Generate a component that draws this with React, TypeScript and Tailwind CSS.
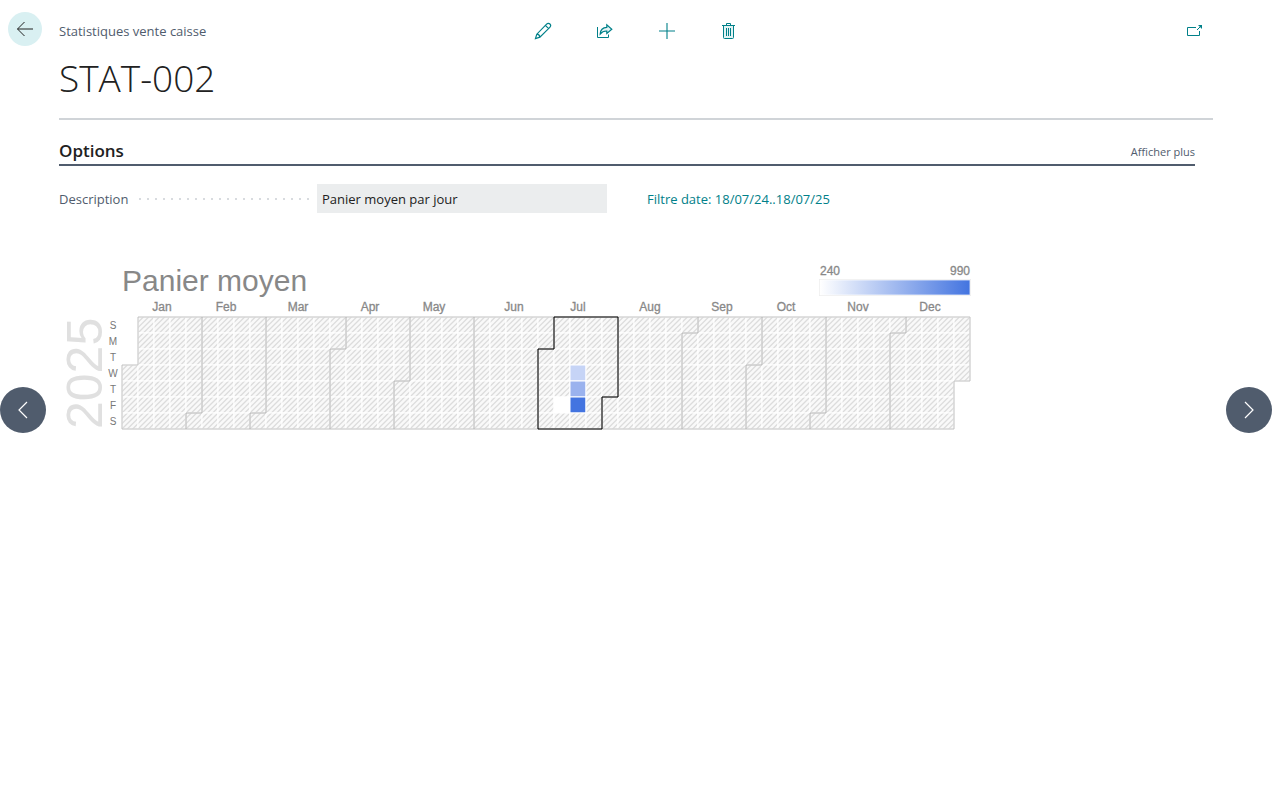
import React from "react";

const CELL = 16;
const LEFT = 122;
const TOP = 317;

const MONTHS = [
  { name: "Jan", x: 162, days: 31 },
  { name: "Feb", x: 226, days: 28 },
  { name: "Mar", x: 298, days: 31 },
  { name: "Apr", x: 370, days: 30 },
  { name: "May", x: 434, days: 31 },
  { name: "Jun", x: 514, days: 30 },
  { name: "Jul", x: 578, days: 31 },
  { name: "Aug", x: 650, days: 31 },
  { name: "Sep", x: 722, days: 30 },
  { name: "Oct", x: 786, days: 31 },
  { name: "Nov", x: 858, days: 30 },
  { name: "Dec", x: 930, days: 31 },
];

const WEEKDAYS = ["S", "M", "T", "W", "T", "F", "S"];

// 1 January 2025 is a Wednesday.
const FIRST_WEEKDAY = 3;

// Day of the year (from 0) to cell colour.
const VALUES: Record<number, string> = {
  191: "#ffffff",
  196: "#c6d4f6",
  197: "#9ab2ee",
  198: "#4374e0",
};

function position(day: number) {
  const slot = day + FIRST_WEEKDAY;
  return { x: LEFT + Math.floor(slot / 7) * CELL, y: TOP + (slot % 7) * CELL };
}

const BOTTOM = TOP + 7 * CELL;

function divider(day: number) {
  const { x, y } = position(day);
  if (y === TOP) return `M${x} ${TOP}V${BOTTOM}`;
  return `M${x + CELL} ${TOP}V${y}H${x}V${BOTTOM}`;
}

const monthStarts = MONTHS.map((_, i) =>
  MONTHS.slice(0, i).reduce((sum, m) => sum + m.days, 0),
);

const days = Array.from({ length: 365 }, (_, i) => i);

function CalendarChart() {
  return (
    <svg
      role="img"
      aria-label="Panier moyen 2025"
      width="916"
      height="175"
      viewBox="59 260 916 175"
      fontFamily="'Liberation Sans', Arial, sans-serif"
      className="block shrink-0 overflow-visible"
    >
      <defs>
        <pattern id="hatch" x="122" y="317" width="16" height="16" patternUnits="userSpaceOnUse">
          <rect width="16" height="16" fill="#f9f9f9" />
          <path
            d="M-1 6.33L6.33 -1M-1 11.67L11.67 -1M-1 17L17 -1M4.33 17L17 4.33M9.67 17L17 9.67M15 17L17 15M-1 1L1 -1"
            stroke="#dcdcdc"
            strokeWidth="1.3"
          />
        </pattern>
        <linearGradient id="scale">
          <stop offset="0" stopColor="#ffffff" />
          <stop offset="1" stopColor="#4374e0" />
        </linearGradient>
      </defs>

      <text x="122" y="291" fontSize="30" fill="#888888">Panier moyen</text>

      <g fontSize="12" fill="#888888" stroke="#888888" strokeWidth="0.3">
        <text x="820" y="275">240</text>
        <text x="970" y="275" textAnchor="end">990</text>
        {MONTHS.map((m) => (
          <text key={m.name} x={m.x} y="311" textAnchor="middle">{m.name}</text>
        ))}
      </g>
      <rect x="819" y="279" width="152" height="17" fill="#ebebeb" />
      <rect x="820" y="280" width="150" height="15" fill="url(#scale)" stroke="#ffffff" strokeOpacity="0.7" />

      <g fontSize="10" fill="#777777" textAnchor="middle">
        {WEEKDAYS.map((d, i) => (
          <text key={i} x="113" y={329 + i * CELL}>{d}</text>
        ))}
      </g>
      <text transform="translate(102 429) rotate(-90)" fontSize="50" fill="#e0e0e0">2025</text>

      <g stroke="#ffffff">
        {days.map((d) => {
          const { x, y } = position(d);
          return (
            <rect key={d} x={x} y={y} width={CELL} height={CELL} fill={VALUES[d] ?? "url(#hatch)"} />
          );
        })}
      </g>

      <g fill="none">
        <path d="M138 317H970V381H954V429H122V365H138Z" stroke="#c0c0c0" />
        {monthStarts.slice(1).map((d) => (
          <path key={d} d={divider(d)} stroke="#b0b0b0" />
        ))}
        <path d="M554 317H618V397H602V429H538V349H554Z" stroke="#000000" />
      </g>
    </svg>
  );
}

const iconProps = {
  width: 18,
  height: 18,
  viewBox: "0 0 18 18",
  fill: "none",
  stroke: "currentColor",
  "aria-hidden": true,
} as const;

const actions = [
  {
    label: "Modifier",
    icon: (
      <svg {...iconProps}>
        <path
          d="M1.5 16.5L2.8 12.2L12.6 2.2C13.6 1.2 15 1.1 15.9 2C16.8 2.9 16.8 4.3 15.8 5.3L5.9 15.2L1.5 16.5ZM11.4 3.4L14.6 6.6M2.8 12.2C4.5 12.3 5.7 13.5 5.9 15.2"
          strokeWidth="1.2"
        />
      </svg>
    ),
  },
  {
    label: "Partager",
    icon: (
      <svg {...iconProps}>
        <path d="M1.5 5V15.5H12.5V12.5" />
        <path d="M4.2 12C4.4 8 6.8 5.6 10.8 5.4V2.8L15.8 7.3L10.8 11.5V9C8 8.8 6 9.8 4.2 12Z" fill="#e3f3f4" strokeWidth="1.2" />
      </svg>
    ),
  },
  {
    label: "Nouveau",
    icon: (
      <svg {...iconProps}>
        <path d="M9 1V17M1 9H17" strokeWidth="1.1" />
      </svg>
    ),
  },
  {
    label: "Supprimer",
    icon: (
      <svg {...iconProps}>
        <path d="M3.5 3.5V15.5C3.5 16.2 3.8 16.5 4.5 16.5H12.5C13.2 16.5 13.5 16.2 13.5 15.5V3.5" fill="#e3f3f4" />
        <path d="M2 3.5H15M6.5 3.5V1.5H10.5V3.5M6.5 6V14M8.5 6V14M10.5 6V14" />
      </svg>
    ),
  },
];

export default function App() {
  return (
    <div className="relative min-h-screen bg-white font-['Open_Sans','Noto_Sans',sans-serif] text-[#505c6d]">
      <button
        type="button"
        aria-label="Retour"
        className="absolute left-2 top-3 flex size-[34px] items-center justify-center rounded-full bg-[#d9f0f2] text-[#212121]"
      >
        <svg {...iconProps}>
          <path d="M17 9H1.5M8.5 2L1.5 9L8.5 16" />
        </svg>
      </button>

      <main className="pl-[59px] pr-[67px] pt-4">
        <header className="border-b-2 border-[#d0d4d8] pb-4">
          <div className="grid h-[30px] grid-cols-[1fr_auto_1fr] items-center">
            <span className="text-[13px] leading-5">Statistiques vente caisse</span>
            <div className="flex gap-11 text-[#008089]">
              {actions.map((a) => (
                <button key={a.label} type="button" aria-label={a.label}>{a.icon}</button>
              ))}
            </div>
            <button
              type="button"
              aria-label="Ouvrir dans une nouvelle fenêtre"
              className="mr-[9px] justify-self-end text-[#008089]"
            >
              <svg {...iconProps}>
                <path d="M10 5.5H1.5V13.5H13.5V9M11 8L15 4" />
                <path d="M12 3H16V7Z" fill="currentColor" stroke="none" />
              </svg>
            </button>
          </div>
          <h1 className="mt-2 text-[37px] font-light leading-[48px] text-[#212121]">STAT-002</h1>
        </header>

        <section className="mr-[18px] pt-[18px]">
          <div className="flex items-end justify-between border-b-2 border-[#505c6d]">
            <h2 className="text-[17px] font-semibold leading-[26px] text-[#212121]">Options</h2>
            <button type="button" className="text-[11px] leading-6">Afficher plus</button>
          </div>
          <div className="mt-[18px] grid grid-cols-2 items-center gap-10 text-[13px] leading-5">
            <div className="flex items-center">
              <label htmlFor="description" className="pr-[11px]">Description</label>
              <span className="mr-1 h-[2px] flex-1 bg-[linear-gradient(to_right,#d8dbdf_2px,transparent_2px)] bg-[length:8px_2px]" />
              <input
                id="description"
                readOnly
                defaultValue="Panier moyen par jour"
                className="h-[29px] w-[290px] bg-[#ebedee] px-[5px] text-[#212121]"
              />
            </div>
            <a href="#filtre" className="text-[#008089]">Filtre date: 18/07/24..18/07/25</a>
          </div>
        </section>

        <div className="mt-[47px]">
          <CalendarChart />
        </div>
      </main>

      <button
        type="button"
        aria-label="Précédent"
        className="absolute left-0 top-[387px] flex size-[46px] items-center justify-center rounded-full bg-[#505c6d] text-white"
      >
        <svg {...iconProps}>
          <path d="M13 1L5 9L13 17" strokeWidth="1.2" />
        </svg>
      </button>
      <button
        type="button"
        aria-label="Suivant"
        className="absolute right-2 top-[387px] flex size-[46px] items-center justify-center rounded-full bg-[#505c6d] text-white"
      >
        <svg {...iconProps}>
          <path d="M5 1L13 9L5 17" strokeWidth="1.2" />
        </svg>
      </button>
    </div>
  );
}
